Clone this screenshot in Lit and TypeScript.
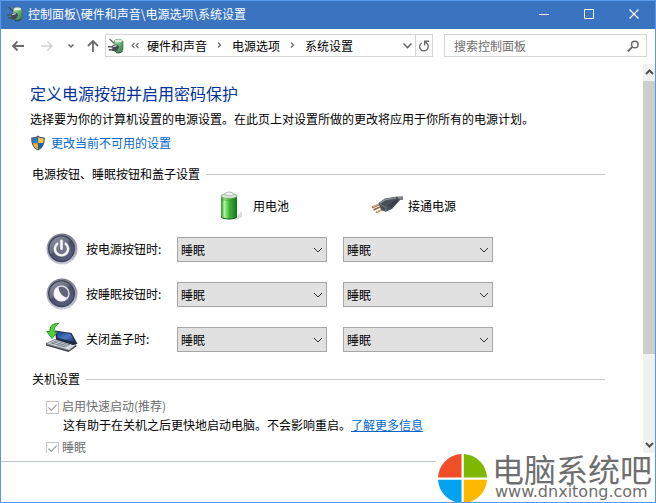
import { LitElement, html, css, svg } from "lit";
import { customElement, property } from "lit/decorators.js";

const plugBattery = svg`
  <defs>
    <linearGradient id="pb" x1="0" x2="1" y1="0" y2="1">
      <stop offset="0" stop-color="#cdeccf"/><stop offset=".45" stop-color="#6db878"/><stop offset="1" stop-color="#2f7a40"/>
    </linearGradient>
  </defs>
  <path d="M6 4C6.200.4 14.500.4 15 4v7c0 3.500-8 4-9 1z" fill="url(#pb)" stroke="#47744f" stroke-width=".7"/>
  <ellipse cx="10.600" cy="2.900" rx="3.400" ry="1.400" fill="#dff2df"/>
  <path d="M1.500.8 6 5.400" stroke="#454b4b" stroke-width="1.100" fill="none"/>
  <path d="M0 8.800h4.500M.8 11.800h4.500" stroke="#50565a" stroke-width="1.400"/>
  <path d="M4.200 7.400 8 6.400q3 .4 2.900 2.900l-1.200 3-2.400 1.400-3.100-1z" fill="#454c50"/>
  <path d="M5.200 8.600 8.600 7.700" stroke="#cfd8d8" stroke-width="1.200"/>
  <path d="M8 14.500q4.500 1 6.500-1.500" stroke="#24482e" stroke-width="1.200" fill="none"/>`;

const disc = (id: string) => svg`
  <defs>
    <linearGradient id="${id}r" x1="0" x2="0" y1="0" y2="1">
      <stop offset="0" stop-color="#777b88"/><stop offset="1" stop-color="#c9ccda"/>
    </linearGradient>
    <linearGradient id="${id}f" x1="0" x2=".7" y1="0" y2="1">
      <stop offset="0" stop-color="#9a9dab"/><stop offset=".48" stop-color="#696d80"/>
      <stop offset=".55" stop-color="#4a4e66"/><stop offset="1" stop-color="#5a6083"/>
    </linearGradient>
  </defs>
  <circle cx="16" cy="16" r="15.500" fill="url(#${id}r)"/>
  <circle cx="15.500" cy="15.700" r="12.800" fill="url(#${id}f)" stroke="#40445a" stroke-width="1.400"/>
  <circle cx="15.500" cy="15.500" r="8.600" fill="#8d909e" opacity=".6"/>`;

const powerIcon = svg`${disc("p")}
  <path d="M11.200 10.800a6.600 6.600 0 1 0 8.600 0" fill="none" stroke="#f4f5f9" stroke-width="2.400" stroke-linecap="round"/>
  <path d="M15.500 7.800v8" stroke="#f4f5f9" stroke-width="2.600" stroke-linecap="round"/>`;

const sleepIcon = svg`${disc("s")}
  <circle cx="15.500" cy="15.500" r="7.400" fill="#62667a" stroke="#e6e7ee" stroke-width="1.200"/>
  <path d="M12.500 8.800C12.500 14 16.500 19.500 21.600 19.700A7.400 7.400 0 1 1 12.500 8.800z" fill="#f8f8fc"/>`;

const lidIcon = svg`
  <defs>
    <linearGradient id="ls" x1="0" x2="1" y1="0" y2="1">
      <stop offset="0" stop-color="#1d3a86"/><stop offset=".5" stop-color="#4b74c4"/><stop offset="1" stop-color="#182a5c"/>
    </linearGradient>
  </defs>
  <path d="M0 20.500 9 16.500 30 22 23 27.500z" fill="#d4d8de" stroke="#555b66" stroke-width=".7"/>
  <path d="M4 20.300 10 17.600 24.500 21.600 18.500 24.600z" fill="#7b8391"/>
  <path d="M7 19.500 20 23.300M9.500 18.300 22 22.200M8.500 21.600 13 19" stroke="#dde0e6" stroke-width=".6"/>
  <path d="M9 7.500 25.500 10 31.500 20.800 27 22 10 16.500z" fill="#202a40"/>
  <path d="M10.500 8.600 24.800 10.900 29.400 19.500 11.500 14.800z" fill="url(#ls)"/>
  <path d="M0 21v1.500L22.500 29l8-5.500v-1.500L22.800 27.500z" fill="#3d424c"/>
  <path d="M12.500.6C6.500 0 3.500 3.500 4 8.500L.8 8.500 6 15.500 11.500 9 8.200 8.800C8 5.500 9 3 12.500.6z" fill="#52d13c" stroke="#23861c" stroke-width=".9"/>`;

const batteryIcon = svg`
  <defs>
    <linearGradient id="bt" x1="0" x2="1" y1="0" y2="0">
      <stop offset="0" stop-color="#2f9a2c"/><stop offset=".25" stop-color="#a4e88d"/>
      <stop offset=".5" stop-color="#45bd3a"/><stop offset="1" stop-color="#11701a"/>
    </linearGradient>
  </defs>
  <path d="M20 28 27 21v6l-6 3z" fill="#999" opacity=".35"/>
  <path d="M6 6v21c0 3 16 3 16 0V6z" fill="url(#bt)"/>
  <path d="M6.400 27c1 2.600 14.200 2.600 15.200 0" fill="none" stroke="#176b1b" stroke-width="1"/>
  <ellipse cx="14" cy="6" rx="8" ry="2.600" fill="#d4e6d0" stroke="#6f9e6d" stroke-width=".7"/>
  <ellipse cx="14.300" cy="4" rx="4" ry="1.900" fill="#f0f0f4" stroke="#999" stroke-width=".6"/>
  <path d="M9.300 10v17" stroke="#d5f8c6" stroke-width="1.500" opacity=".6"/>
  <path d="M6 9.500q8 3 16 0M15 12v16" stroke="#1f8d23" stroke-width=".7" fill="none" opacity=".5"/>`;

const cordIcon = svg`
  <path d="M25 9.500C27 8 29 8.300 32 7.800" stroke="#747a80" stroke-width="4" fill="none"/>
  <path d="M26 7.500q3-1 6-.9" stroke="#b5babf" stroke-width="1" fill="none"/>
  <path d="M1 17.500 9.500 14M5 22.500 13 19M2.500 19.800 9 17" stroke="#a56a43" stroke-width="1.900"/>
  <path d="M1.500 17 9 13.900M5.500 21.900 12 19.300" stroke="#f0cda8" stroke-width=".8"/>
  <path d="M7.500 13 14 8.500 26 6.500l3 3.500-8 9-6.500 2.700-4.500-2z" fill="#4a4f58"/>
  <path d="M9 13 14.500 9.700 25 7.800" stroke="#8d949e" stroke-width="1.300" fill="none"/>
  <path d="M8 13.500 15 17.500 14.500 21.500" stroke="#71777f" stroke-width="1" fill="none"/>
  <path d="M17 16 26 10M19 17.500 26.500 11.500" stroke="#2a2e35" stroke-width="1"/>`;

const shieldIcon = svg`
  <path d="M8 .6C6 2.200 3.500 2.600 1.200 2.500 1 9 3 13.200 8 15.600c5-2.400 7-6.600 6.800-13.100C12.500 2.600 10 2.200 8 .6z" fill="#4c5a70"/>
  <path d="M7.800 2C6 3.200 4.300 3.600 2.300 3.600c0 1.600.1 3 .5 4.400h5z" fill="#2b7fd0"/>
  <path d="M8.200 2c1.800 1.200 3.500 1.600 5.500 1.600 0 1.600-.1 3-.5 4.400h-5z" fill="#fbc93c"/>
  <path d="M2.900 8.200h4.900v6.200C5.200 13 3.600 11 2.900 8.200z" fill="#f6b926"/>
  <path d="M13.100 8.200H8.200v6.200c2.600-1.400 4.200-3.400 4.900-6.200z" fill="#1c63b6"/>`;

const chevronDown = svg`<path d="M2 4 6 8l4-4" fill="none" stroke="currentColor" stroke-width="1"/>`;

@customElement("action-select")
class ActionSelect extends LitElement {
  @property() label = "";

  static styles = css`
    :host { display: block; position: relative; }
    .box {
      appearance: none; display: block; width: 100%; height: 25px; box-sizing: border-box;
      margin: 0; padding: 0 24px 0 3px; border: 1px solid #a6a6a6; border-radius: 0;
      background: #e1e1e1; color: #000; font: inherit;
    }
    .arrow { position: absolute; right: 3px; top: 7px; width: 12px; height: 12px; color: #333; pointer-events: none; }
  `;

  render() {
    return html`
      <select class="box" aria-label=${this.label}><option>睡眠</option></select>
      <svg class="arrow" viewBox="0 0 12 12">${chevronDown}</svg>`;
  }
}

@customElement("app-root")
class AppRoot extends LitElement {
  static styles = css`
    :host {
      display: flex; flex-direction: column; position: relative; box-sizing: border-box; height: 100vh;
      border: solid #5b97e0; border-width: 0 1px 1px; background: #fff; color: #000;
      font: 12px/16px "Noto Sans CJK SC", sans-serif; overflow: hidden;
    }
    svg { display: block; flex: none; }
    button { border: 0; padding: 0; margin: 0; background: none; color: inherit; font: inherit; display: flex; align-items: center; justify-content: center; flex: none; }
    a { color: #0066cc; }
    h1, h2, p { margin: 0; font-weight: 400; }

    .titlebar { display: flex; align-items: center; flex: none; height: 29px; box-sizing: border-box; margin: 0 -1px; padding: 0 0 2px 7px; gap: 5px; border-top: 1px solid #5b9bee; background: #3a74c0; color: #fff; }
    .caption { flex: 1; white-space: nowrap; }
    .controls { display: flex; }
    .controls button { width: 45px; height: 26px; }

    .nav { display: flex; align-items: center; flex: none; height: 35px; box-sizing: border-box; padding: 0 8px 2px 3px; color: #6a6a6a; }
    .arrows { display: grid; grid-template-columns: 28px 30px 18px 25px; align-items: center; }
    .faint { color: #cfcfcf; }
    .address { display: flex; align-items: center; flex: 1; height: 23px; box-sizing: border-box; border: 1px solid #d5d5d5; padding-left: 2px; min-width: 0; color: #6a6a6a; }
    .crumbs { display: flex; align-items: center; flex: 1; gap: 8px; padding-left: 6px; white-space: nowrap; }
    .crumbs button { color: #000; }
    .refresh { width: 17px; height: 21px; border-left: 1px solid #d5d5d5; margin-left: 2px; }
    .search { display: flex; align-items: center; flex: none; width: 203px; height: 23px; box-sizing: border-box; margin-left: 11px; padding: 0 7px 0 9px; border: 1px solid #d5d5d5; }
    .query { flex: 1; min-width: 0; border: 0; padding: 0; outline: 0; background: none; font: inherit; }
    .query::placeholder { color: #6d6d6d; opacity: 1; }

    .body { display: flex; flex: 1; min-height: 0; }
    .content { flex: 1; min-width: 0; overflow: hidden; padding: 19px 38px 0 29px; }
    .heading { font-size: 16px; line-height: 20px; color: #003399; }
    .intro { margin-top: 8px; white-space: nowrap; }
    .admin { display: flex; gap: 5px; align-items: center; margin-top: 8px; }
    .admin a { text-decoration: none; }
    .section { display: flex; align-items: center; gap: 6px; margin-top: 15px; padding-left: 2px; font-size: 12px; line-height: 16px; }
    .section::after { content: ""; flex: 1; height: 1px; background: #c8c8c8; }
    .grid { display: grid; grid-template-columns: 115px 150px 150px; column-gap: 16px; grid-auto-rows: 45px; align-items: center; padding-left: 16px; }
    .sources { display: grid; grid-template-columns: 115px 150px 150px; column-gap: 16px; padding: 8px 0 5px 16px; }
    .source { display: flex; align-items: center; gap: 5px; }
    .battery { grid-column: 2; padding-left: 38px; gap: 6px; }
    .cord { padding-left: 28px; }
    .trigger { display: flex; align-items: center; gap: 8px; padding-bottom: 2px; white-space: nowrap; }
    .shutdown { margin-top: 9px; }
    .options { padding: 11px 0 0 16px; white-space: nowrap; }
    .option { display: flex; align-items: center; gap: 3px; color: #6d6d6d; }
    .note { padding: 3px 0 6px 17px; }
    .tick { display: grid; padding-top: 2px; }
    .check { grid-area: 1 / 1; appearance: none; width: 13px; height: 13px; margin: 0; border: 1px solid #c4c4c4; background: #fff; }
    .mark { grid-area: 1 / 1; pointer-events: none; color: #9c9c9c; z-index: 1; }

    .scroll { display: flex; flex-direction: column; flex: none; width: 12px; background: #f0f0f0; color: #505050; }
    .scroll button { height: 17px; }
    .track { flex: 1; }
    .thumb { height: 77%; background: #cdcdcd; }
    .footer { flex: none; height: 40px; margin-top: 8px; border-top: 1px solid #bcc5cc; }

    .brand { position: absolute; right: -1px; bottom: -1px; display: flex; align-items: flex-start; gap: 5px; height: 49px; padding: 0 4px 0 2px; background: #fff; color: #6e6e6e; }
    .name { font-size: 32px; line-height: 28px; white-space: nowrap; }
    .site { font: 16px/20px "DejaVu Sans", sans-serif; padding-left: 3px; }
  `;

  private icon(shape: unknown, size: number, box = size) {
    return html`<svg width=${size} height=${size} viewBox="0 0 ${box} ${box}" aria-hidden="true">${shape}</svg>`;
  }

  private stroke(d: string, size: number, width = 1.5) {
    return this.icon(svg`<path d=${d} fill="none" stroke="currentColor" stroke-width=${width}/>`, size);
  }

  private row(shape: unknown, text: string) {
    return html`
      <div class="trigger">${this.icon(shape, 32)}<span>${text}</span></div>
      <action-select label="${text} 用电池"></action-select>
      <action-select label="${text} 接通电源"></action-select>`;
  }

  private option(text: string) {
    return html`
      <label class="option">
        <span class="tick"><input class="check" type="checkbox" checked disabled />
          <svg class="mark" width="13" height="13" viewBox="0 0 13 13"><path d="M2.500 6.500 5.300 9.300 10.700 3.700" fill="none" stroke="currentColor" stroke-width="1.200"/></svg>
        </span>
        <span>${text}</span>
      </label>`;
  }

  render() {
    const crumb = this.stroke("M3 1.500 5.500 4 3 6.500", 9, 1.3);
    return html`
      <header class="titlebar">
        ${this.icon(plugBattery, 16)}
        <span class="caption">控制面板\\硬件和声音\\电源选项\\系统设置</span>
        <div class="controls">
          <button aria-label="最小化">${this.stroke("M0 5.500h10", 10, 1)}</button>
          <button aria-label="最大化">${this.stroke("M.5.500h9v9h-9z", 10, 1)}</button>
          <button aria-label="关闭">${this.stroke("M.5.500l9 9M9.500.500l-9 9", 10, 1.1)}</button>
        </div>
      </header>
      <nav class="nav">
        <div class="arrows">
          <button aria-label="后退">${this.stroke("M13 7H2M6.500 2.500 2 7l4.500 4.500", 14, 1.8)}</button>
          <button class="faint" aria-label="前进">${this.stroke("M1 7h11M7.500 2.500 12 7l-4.500 4.500", 14, 1.4)}</button>
          <button aria-label="最近">${this.stroke("M1.500 2.500 4 5l2.500-2.500", 8, 1.5)}</button>
          <button aria-label="上移">${this.stroke("M7 13V2M2 7l5-5 5 5", 14, 1.8)}</button>
        </div>
        <div class="address">
          ${this.icon(plugBattery, 16)}
          <div class="crumbs">
            ${this.stroke("M4.500 2 2 4.500 4.500 7M8.500 2 6 4.500 8.500 7", 9, 1.1)}
            <button>硬件和声音</button>${crumb}<button>电源选项</button>${crumb}<button>系统设置</button>
          </div>
          <button aria-label="历史">${this.stroke("M1.500 3.500 5.500 7.500 9.500 3.500", 11, 1.6)}</button>
          <button class="refresh" aria-label="刷新">${this.stroke("M3.600 3A4.300 4.300 0 1 0 9.200 3.800L7 1.500M6.600 5.500V1.200H11", 12, 1.4)}</button>
        </div>
        <div class="search">
          <input class="query" aria-label="搜索" placeholder="搜索控制面板" />
          <button aria-label="查找">${this.icon(svg`<circle cx="7.800" cy="4.500" r="3.300" fill="none" stroke="currentColor" stroke-width="1.500"/><path d="M5.400 6.900.8 11.500" stroke="currentColor" stroke-width="1.900"/>`, 12)}</button>
        </div>
      </nav>
      <div class="body">
        <main class="content">
          <h1 class="heading">定义电源按钮并启用密码保护</h1>
          <p class="intro">选择要为你的计算机设置的电源设置。在此页上对设置所做的更改将应用于你所有的电源计划。</p>
          <div class="admin">${this.icon(shieldIcon, 16)}<a href="#">更改当前不可用的设置</a></div>
          <h2 class="section">电源按钮、睡眠按钮和盖子设置</h2>
          <div class="sources">
            <div class="source battery">${this.icon(batteryIcon, 32)}<span>用电池</span></div>
            <div class="source cord">${this.icon(cordIcon, 32)}<span>接通电源</span></div>
          </div>
          <div class="grid">
            ${this.row(powerIcon, "按电源按钮时:")}
            ${this.row(sleepIcon, "按睡眠按钮时:")}
            ${this.row(lidIcon, "关闭盖子时:")}
          </div>
          <h2 class="section shutdown">关机设置</h2>
          <div class="options">
            ${this.option("启用快速启动(推荐)")}
            <p class="note">这有助于在关机之后更快地启动电脑。不会影响重启。<a href="#">了解更多信息</a></p>
            ${this.option("睡眠")}
          </div>
        </main>
        <div class="scroll">
          <button aria-label="向上滚动">${this.stroke("M1 6 4.500 2.500 8 6", 9, 2)}</button>
          <div class="track"><div class="thumb"></div></div>
          <button aria-label="向下滚动">${this.stroke("M1 3 4.500 6.500 8 3", 9, 2)}</button>
        </div>
      </div>
      <footer class="footer"></footer>
      <div class="brand">
        <svg width="49" height="49" viewBox="0 0 49 49" aria-hidden="true">
          <path d="M23.500 0v23.500H0A24.500 24.500 0 0 1 23.500 0z" fill="#f04e27"/>
          <path d="M25.800 0v23.500H49A24.500 24.500 0 0 0 25.800 0z" fill="#7db700"/>
          <path d="M23.500 49V25.800H0A24.500 24.500 0 0 0 23.500 49z" fill="#03a3f0"/>
          <path d="M25.800 49V25.800H49A24.500 24.500 0 0 1 25.800 49z" fill="#fdb800"/>
        </svg>
        <div><div class="name">电脑系统吧</div><div class="site">www.dnxitong.com</div></div>
      </div>`;
  }
}
